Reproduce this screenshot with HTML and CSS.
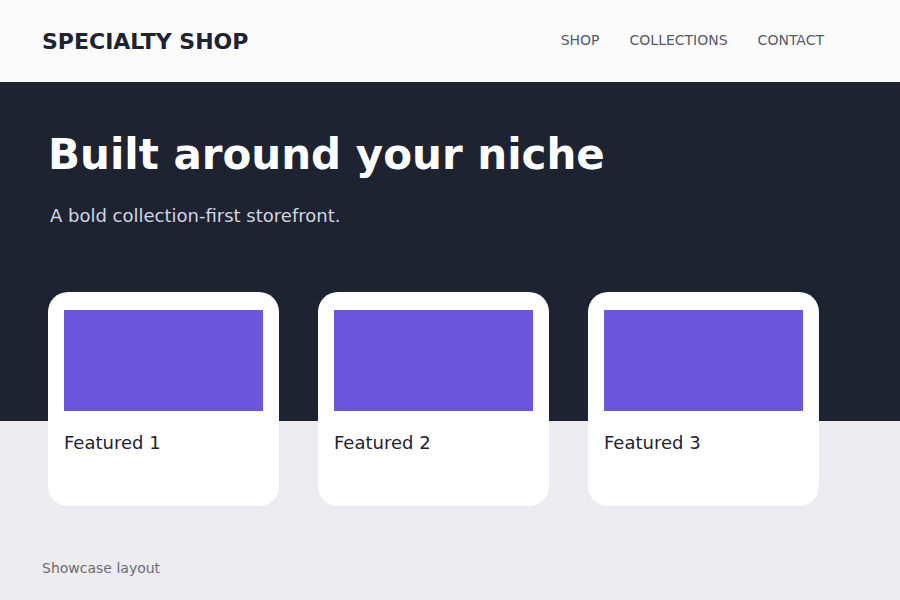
FILE: index.html
```html
<!DOCTYPE html>
<html>
<head>
<meta charset="utf-8">
<link rel="stylesheet" href="styles.css">
</head>
<body>
<header class="topbar">
  <div class="logo">SPECIALTY SHOP</div>
  <nav class="nav">
    <a>SHOP</a>
    <a>COLLECTIONS</a>
    <a>CONTACT</a>
  </nav>
</header>
<main class="main">
  <section class="hero">
    <h1 class="title">Built around your niche</h1>
    <p class="subtitle">A bold collection-first storefront.</p>
  </section>
  <section class="cards">
    <div class="card"><div class="thumb"></div><div class="card-label">Featured 1</div></div>
    <div class="card"><div class="thumb"></div><div class="card-label">Featured 2</div></div>
    <div class="card"><div class="thumb"></div><div class="card-label">Featured 3</div></div>
  </section>
  <footer class="footer">Showcase layout</footer>
</main>
</body>
</html>
```
FILE: styles.css
```css
* { box-sizing: border-box; }
html, body { margin: 0; padding: 0; }
body {
  font-family: "DejaVu Sans", sans-serif;
  width: 900px;
  height: 600px;
  overflow: hidden;
  background: #ebebf0;
}
.topbar {
  height: 82px;
  background: #fafafa;
  display: flex;
  align-items: center;
  justify-content: space-between;
  padding: 0 76px 0 42px;
}
.logo {
  font-weight: bold;
  font-size: 22px;
  color: #1e2231;
}
.nav {
  display: flex;
  gap: 30px;
  font-size: 14px;
  color: #555a66;
  margin-top: -2px;
}
.main {
  height: 518px;
  background: linear-gradient(to bottom, #1e2331 0, #1e2331 339px, #ebebf0 339px);
}
.hero {
  padding: 48px 48px 0 48px;
}
.title {
  margin: 0;
  font-size: 42px;
  font-weight: bold;
  color: #ffffff;
}
.subtitle {
  margin: 26px 0 0 2px;
  font-size: 18px;
  color: #d1d5e0;
}
.cards {
  display: flex;
  gap: 39px;
  padding: 0 48px;
  margin-top: 66px;
}
.card {
  width: 231px;
  height: 214px;
  background: #ffffff;
  border-radius: 20px;
  padding: 18px 16px 0 16px;
}
.thumb {
  height: 101px;
  background: #6a55dc;
}
.card-label {
  margin-top: 21px;
  font-size: 18px;
  color: #1e2231;
}
.footer {
  margin: 54px 0 0 42px;
  font-size: 14px;
  color: #6b6b75;
}
```
